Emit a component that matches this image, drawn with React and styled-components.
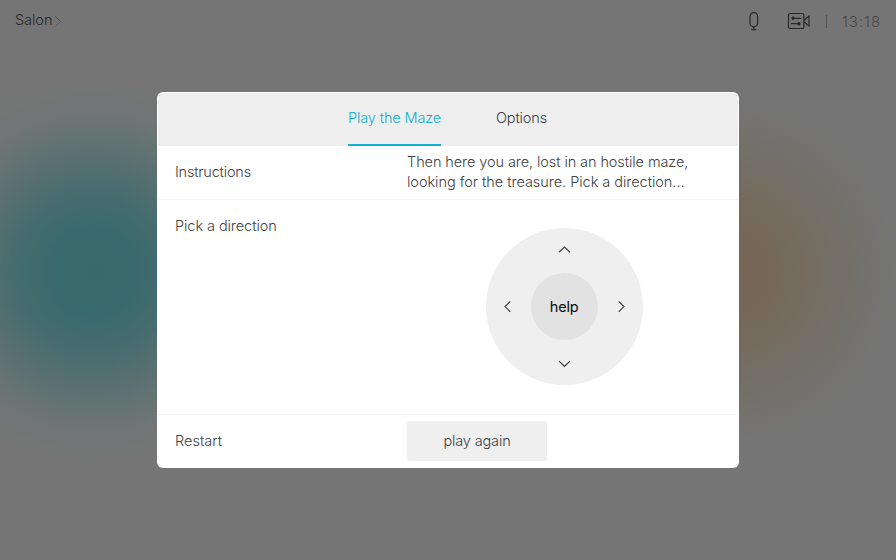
import React from "react";
import styled, { createGlobalStyle } from "styled-components";

const GlobalStyle = createGlobalStyle`
  * { box-sizing: border-box; }
  body { margin: 0; font-family: Inter, "Liberation Sans", sans-serif; }
  button { font: inherit; color: inherit; border: 0; padding: 0; cursor: pointer; }
`;

const Screen = styled.div`
  width: 896px;
  height: 560px;
  overflow: hidden;
  display: flex;
  flex-direction: column;
  align-items: center;
  font-size: 14.5px;
  font-weight: 300;
  color: #404142;
  background:
    radial-gradient(circle at 93px 272px, #386a6c 0, #3a6a6d 42px, #446c6e 75px, #566f71 108px, #677373 140px, #717575 162px, rgba(117, 117, 117, 0) 188px),
    radial-gradient(circle at 724px 272px, #756555 0, #75695a 55px, #746d61 90px, #737069 122px, rgba(117, 117, 117, 0) 172px),
    #757575;
`;

const StatusBar = styled.header`
  width: 100%;
  height: 92px;
  padding: 10px 15px 0;
  display: flex;
  justify-content: space-between;
  align-items: flex-start;
`;

const RoomName = styled.div`
  height: 21px;
  display: flex;
  align-items: flex-start;
  gap: 2px;
  line-height: 20px;
  letter-spacing: -0.05px;
  color: #292929;
`;

const RoomChevron = styled.svg`
  margin-top: 3.5px;
`;

const StatusIcons = styled.div`
  height: 22px;
  display: flex;
  align-items: center;
  color: #292929;
`;

const CameraIcon = styled.svg`
  margin-left: 27px;
`;

const Divider = styled.span`
  width: 1px;
  height: 13px;
  margin: 0 15px 0 16px;
  background: #4f4f4f;
`;

const Clock = styled.time`
  width: 39px;
  white-space: nowrap;
  color: #484848;
  font-size: 15px;
  letter-spacing: 0.95px;
`;

const Panel = styled.main`
  width: 582px;
  height: 376px;
  padding: 1px;
  border-radius: 6px;
  background: #fff;
  overflow: hidden;
`;

const Tabs = styled.nav`
  height: 53px;
  display: flex;
  justify-content: center;
  gap: 55px;
  padding-right: 1px;
  border-radius: 5px 5px 0 0;
  background: #eee;
`;

const Tab = styled.button`
  height: 53px;
  width: ${({ $width }) => $width}px;
  padding-bottom: 2px;
  white-space: nowrap;
  background: none;
  letter-spacing: ${({ $spacing }) => $spacing}px;
  color: ${({ $active }) => ($active ? "#10b0d0" : "inherit")};
  border-bottom: 2px solid ${({ $active }) => ($active ? "#10b0d0" : "transparent")};
`;

const Row = styled.section`
  height: ${({ $height }) => $height}px;
  display: grid;
  grid-template-columns: 232px 1fr;
  padding-left: 17px;
  padding-bottom: ${({ $bottom }) => $bottom || 0}px;
  align-items: ${({ $align }) => $align || "center"};
  border-bottom: ${({ $last }) => ($last ? "0" : "1px solid #f5f5f5")};
`;

const Label = styled.h2`
  margin: 0;
  font-size: inherit;
  font-weight: 300;
  line-height: 20px;
  letter-spacing: ${({ $spacing }) => $spacing || 0}px;
  padding-top: ${({ $top }) => $top || 0}px;
`;

const Message = styled.p`
  margin: 0;
  line-height: 20px;
  white-space: nowrap;
`;

const Line = styled.span`
  display: block;
  letter-spacing: ${({ $spacing }) => $spacing}px;
`;

const Wheel = styled.div`
  width: 157px;
  height: 157px;
  margin: 28px 0 0 78.7px;
  display: grid;
  grid-template-columns: 45px 67px 45px;
  grid-template-rows: 45px 67px 45px;
  border-radius: 50%;
  background: #efefef;
`;

const WheelButton = styled.button`
  grid-area: ${({ $area }) => $area};
  display: grid;
  place-items: center;
  background: none;
`;

const HelpButton = styled.button`
  grid-area: 2 / 2;
  border-radius: 50%;
  background: #e2e2e2;
  color: #0c0c0c;
  font-weight: 370;
  letter-spacing: -0.15px;
`;

const PlayButton = styled.button`
  width: 140px;
  height: 40px;
  padding-bottom: 2px;
  border-radius: 3px;
  background: #efefef;
  letter-spacing: -0.15px;
`;

const arrows = [
  { name: "Up", area: "1 / 2", path: "M2 9.3 7.5 4.1 13 9.3" },
  { name: "Left", area: "2 / 1", path: "M9.3 2.3 4.1 7.6 9.3 12.9" },
  { name: "Right", area: "2 / 3", path: "M5.7 2.3 10.9 7.6 5.7 12.9" },
  { name: "Down", area: "3 / 2", path: "M2 6.1 7.5 11.3 13 6.1" },
];

export default function App() {
  return (
    <>
      <GlobalStyle />
      <Screen>
        <StatusBar>
          <RoomName>
            Salon
            <RoomChevron width="8" height="14" viewBox="0 0 8 14" fill="none" stroke="#555" strokeWidth="1">
              <path d="M1 2 6.5 7.5 1 13" />
            </RoomChevron>
          </RoomName>
          <StatusIcons>
            <svg width="12" height="20" viewBox="0 0 12 20" fill="none" stroke="currentColor" strokeWidth="1.2">
              <rect x="2" y="1.6" width="7.6" height="14.2" rx="3.8" />
              <path d="M5.8 15.8V18.6M3.2 18.6h5.2" />
            </svg>
            <CameraIcon width="23" height="18" viewBox="0 0 23 18" fill="none" stroke="currentColor" strokeWidth="1.2">
              <rect x="1.5" y="1.5" width="15.4" height="15" rx="1.6" />
              <path d="M17 8.2 22 4v10l-5-4.2M7 6.3h7.4M4 11.7h7" />
              <circle cx="6" cy="6.3" r="1.1" fill="currentColor" />
              <circle cx="12" cy="11.7" r="1.1" fill="currentColor" />
            </CameraIcon>
            <Divider />
            <Clock>13:18</Clock>
          </StatusIcons>
        </StatusBar>
        <Panel>
          <Tabs>
            <Tab $active $width={93} $spacing={-0.13}>Play the Maze</Tab>
            <Tab $width={51} $spacing={-0.15}>Options</Tab>
          </Tabs>
          <Row $height={54} $bottom={2}>
            <Label $spacing={-0.2}>Instructions</Label>
            <Message>
              <Line $spacing={-0.09}>Then here you are, lost in an hostile maze,</Line>
              <Line $spacing={-0.04}>looking for the treasure. Pick a direction...</Line>
            </Message>
          </Row>
          <Row $height={215} $align="start">
            <Label $top={16} $spacing={-0.07}>Pick a direction</Label>
            <Wheel>
              {arrows.map(({ name, area, path }) => (
                <WheelButton key={name} $area={area} aria-label={name}>
                  <svg width="15" height="15" viewBox="0 0 15 15" fill="none" stroke="currentColor" strokeWidth="1.2">
                    <path d={path} />
                  </svg>
                </WheelButton>
              ))}
              <HelpButton>help</HelpButton>
            </Wheel>
          </Row>
          <Row $height={52} $last>
            <Label>Restart</Label>
            <PlayButton>play again</PlayButton>
          </Row>
        </Panel>
      </Screen>
    </>
  );
}
